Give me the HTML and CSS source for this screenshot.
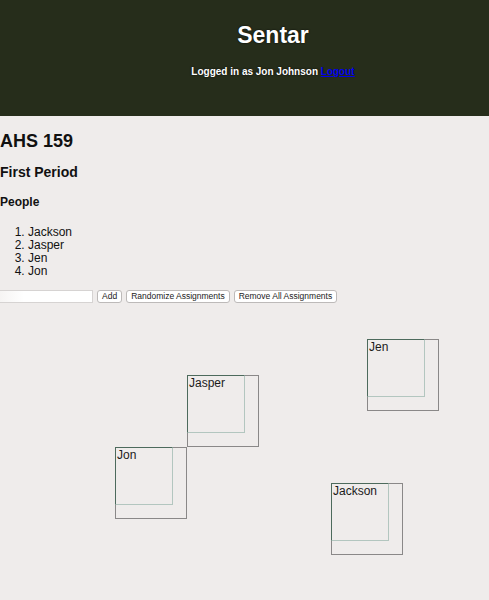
FILE: index.html
```html
<!DOCTYPE html>
<html lang="en">
<head>
<meta charset="utf-8">
<title>Sentar</title>
<link rel="stylesheet" href="styles.css">
</head>
<body>
<header class="topbar">
  <h1 class="brand">Sentar</h1>
  <p class="login">Logged in as Jon Johnson <a href="#" class="logout">Logout</a></p>
</header>
<main class="content">
  <h1 class="course">AHS 159</h1>
  <h2 class="period">First Period</h2>
  <h3 class="section">People</h3>
  <ol class="people">
    <li>Jackson</li>
    <li>Jasper</li>
    <li>Jen</li>
    <li>Jon</li>
  </ol>
  <div class="controls">
    <input class="name-input" type="text">
    <button class="btn">Add</button>
    <button class="btn">Randomize Assignments</button>
    <button class="btn">Remove All Assignments</button>
  </div>
  <div class="board">
    <div class="seat seat-jen"><div class="person">Jen</div></div>
    <div class="seat seat-jasper"><div class="person">Jasper</div></div>
    <div class="seat seat-jon"><div class="person">Jon</div></div>
    <div class="seat seat-jackson"><div class="person">Jackson</div></div>
  </div>
</main>
</body>
</html>
```
FILE: styles.css
```css
html, body {
  margin: 0;
  padding: 0;
}
body {
  background: #efeceb;
  font-family: "Liberation Sans", Arial, sans-serif;
  color: #111;
  width: 489px;
  overflow: hidden;
}
.topbar {
  background: #262d1b;
  height: 116px;
  box-sizing: border-box;
  padding: 22px 0 0 57px;
  text-align: center;
  color: #fff;
  text-shadow: 0 0 2px rgba(0,0,0,0.9);
}
.brand {
  margin: 0;
  font-size: 23px;
  line-height: 26px;
  font-weight: bold;
}
.login {
  margin: 17px 0 0;
  font-size: 10px;
  line-height: 13px;
  font-weight: bold;
}
.logout {
  color: #0000ee;
  text-decoration: underline;
  text-shadow: none;
}
.content {
  padding-top: 15px;
}
.course {
  margin: 0;
  font-size: 18px;
  line-height: 20px;
  font-weight: bold;
}
.period {
  margin: 13px 0 0;
  font-size: 14px;
  line-height: 17px;
  font-weight: bold;
}
.section {
  margin: 14px 0 0;
  font-size: 12px;
  line-height: 14px;
  font-weight: bold;
}
.people {
  margin: 17px 0 0;
  padding-left: 28px;
  font-size: 12px;
  line-height: 13px;
}
.controls {
  margin-top: 11px;
  display: flex;
  align-items: center;
  gap: 4px;
  height: 14px;
}
.name-input {
  margin: 0 0 0 -6px;
  width: 99px;
  height: 13px;
  box-sizing: border-box;
  border: 1px solid #d6d3d2;
  background: linear-gradient(to right, #f4f2f1, #ffffff 30%);
  padding: 0;
}
.btn {
  margin: 0;
  height: 13px;
  box-sizing: border-box;
  padding: 0 4px;
  border: 1px solid #bdbab9;
  border-radius: 3px;
  background: #fff;
  font-family: "Liberation Sans", Arial, sans-serif;
  font-size: 8.5px;
  line-height: 11px;
  color: #222;
}
.board {
  position: relative;
  height: 290px;
}
.seat {
  position: absolute;
  width: 72px;
  height: 72px;
  box-sizing: border-box;
  border: 1px solid #8a8888;
}
.person {
  position: absolute;
  top: -1px;
  left: -1px;
  width: 58px;
  height: 58px;
  box-sizing: border-box;
  border-top: 1px solid #4d6a5c;
  border-left: 1px solid #4d6a5c;
  border-right: 1.5px solid #b3c6bf;
  border-bottom: 1.5px solid #b3c6bf;
  font-size: 12px;
  line-height: 14px;
  padding-left: 1px;
  color: #1b1b1b;
}
.seat-jen { left: 367px; top: 36px; }
.seat-jasper { left: 187px; top: 72px; }
.seat-jon { left: 115px; top: 144px; }
.seat-jackson { left: 331px; top: 180px; }
```
